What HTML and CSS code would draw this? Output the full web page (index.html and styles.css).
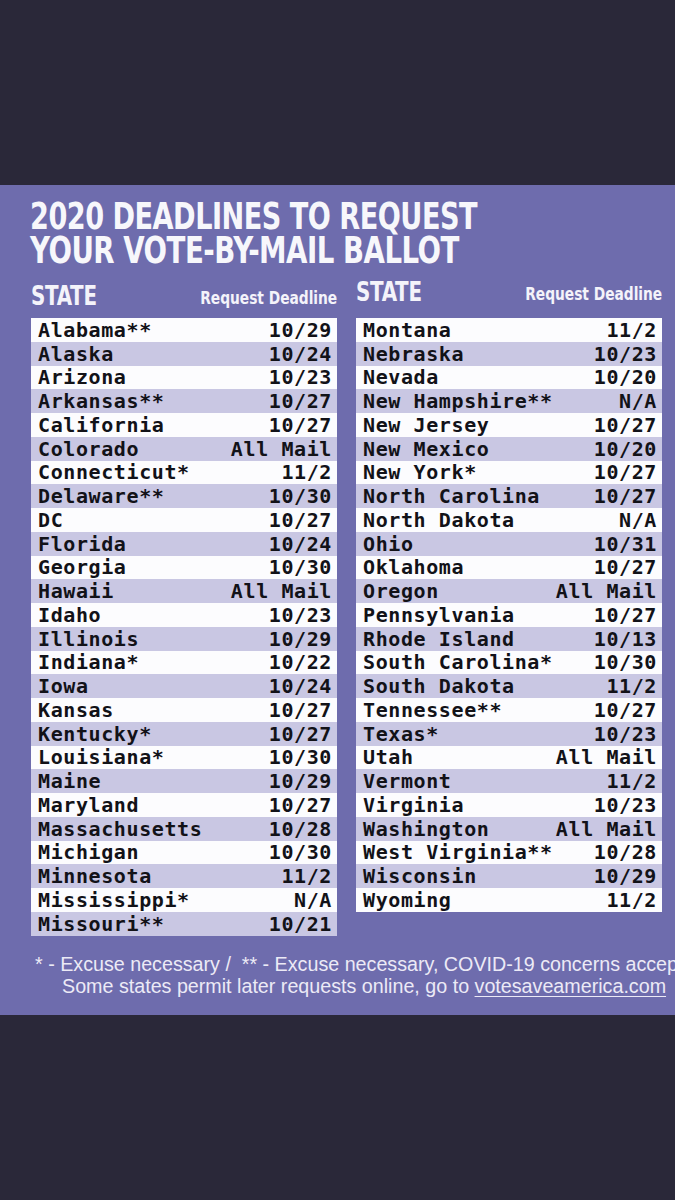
FILE: index.html
```html
<!DOCTYPE html>
<html lang="en">
<head>
<meta charset="utf-8">
<title>2020 Deadlines to Request Your Vote-by-Mail Ballot</title>
<link rel="stylesheet" href="styles.css">
</head>
<body>
<div class="page">
  <div class="band"></div>
  <section class="panel">
    <h1 class="title"><span class="title-line">2020 DEADLINES TO REQUEST</span><span class="title-line">YOUR VOTE-BY-MAIL BALLOT</span></h1>
    <div class="columns">
      <div class="col">
        <div class="head"><span class="head-state">STATE</span><span class="head-deadline">Request Deadline</span></div>
        <div class="table">
          <div class="row"><span>Alabama**</span><span>10/29</span></div>
          <div class="row alt"><span>Alaska</span><span>10/24</span></div>
          <div class="row"><span>Arizona</span><span>10/23</span></div>
          <div class="row alt"><span>Arkansas**</span><span>10/27</span></div>
          <div class="row"><span>California</span><span>10/27</span></div>
          <div class="row alt"><span>Colorado</span><span>All Mail</span></div>
          <div class="row"><span>Connecticut*</span><span>11/2</span></div>
          <div class="row alt"><span>Delaware**</span><span>10/30</span></div>
          <div class="row"><span>DC</span><span>10/27</span></div>
          <div class="row alt"><span>Florida</span><span>10/24</span></div>
          <div class="row"><span>Georgia</span><span>10/30</span></div>
          <div class="row alt"><span>Hawaii</span><span>All Mail</span></div>
          <div class="row"><span>Idaho</span><span>10/23</span></div>
          <div class="row alt"><span>Illinois</span><span>10/29</span></div>
          <div class="row"><span>Indiana*</span><span>10/22</span></div>
          <div class="row alt"><span>Iowa</span><span>10/24</span></div>
          <div class="row"><span>Kansas</span><span>10/27</span></div>
          <div class="row alt"><span>Kentucky*</span><span>10/27</span></div>
          <div class="row"><span>Louisiana*</span><span>10/30</span></div>
          <div class="row alt"><span>Maine</span><span>10/29</span></div>
          <div class="row"><span>Maryland</span><span>10/27</span></div>
          <div class="row alt"><span>Massachusetts</span><span>10/28</span></div>
          <div class="row"><span>Michigan</span><span>10/30</span></div>
          <div class="row alt"><span>Minnesota</span><span>11/2</span></div>
          <div class="row"><span>Mississippi*</span><span>N/A</span></div>
          <div class="row alt"><span>Missouri**</span><span>10/21</span></div>
        </div>
      </div>
      <div class="col">
        <div class="head head-right"><span class="head-state">STATE</span><span class="head-deadline">Request Deadline</span></div>
        <div class="table">
          <div class="row"><span>Montana</span><span>11/2</span></div>
          <div class="row alt"><span>Nebraska</span><span>10/23</span></div>
          <div class="row"><span>Nevada</span><span>10/20</span></div>
          <div class="row alt"><span>New Hampshire**</span><span>N/A</span></div>
          <div class="row"><span>New Jersey</span><span>10/27</span></div>
          <div class="row alt"><span>New Mexico</span><span>10/20</span></div>
          <div class="row"><span>New York*</span><span>10/27</span></div>
          <div class="row alt"><span>North Carolina</span><span>10/27</span></div>
          <div class="row"><span>North Dakota</span><span>N/A</span></div>
          <div class="row alt"><span>Ohio</span><span>10/31</span></div>
          <div class="row"><span>Oklahoma</span><span>10/27</span></div>
          <div class="row alt"><span>Oregon</span><span>All Mail</span></div>
          <div class="row"><span>Pennsylvania</span><span>10/27</span></div>
          <div class="row alt"><span>Rhode Island</span><span>10/13</span></div>
          <div class="row"><span>South Carolina*</span><span>10/30</span></div>
          <div class="row alt"><span>South Dakota</span><span>11/2</span></div>
          <div class="row"><span>Tennessee**</span><span>10/27</span></div>
          <div class="row alt"><span>Texas*</span><span>10/23</span></div>
          <div class="row"><span>Utah</span><span>All Mail</span></div>
          <div class="row alt"><span>Vermont</span><span>11/2</span></div>
          <div class="row"><span>Virginia</span><span>10/23</span></div>
          <div class="row alt"><span>Washington</span><span>All Mail</span></div>
          <div class="row"><span>West Virginia**</span><span>10/28</span></div>
          <div class="row alt"><span>Wisconsin</span><span>10/29</span></div>
          <div class="row"><span>Wyoming</span><span>11/2</span></div>
        </div>
      </div>
    </div>
    <div class="notes">
      <p class="note note-1">* - Excuse necessary /&nbsp; ** - Excuse necessary, COVID-19 concerns accepted</p>
      <p class="note note-2">Some states permit later requests online, go to <span class="link">votesaveamerica.com</span></p>
    </div>
  </section>
  <div class="band band-bottom"></div>
</div>
</body>
</html>
```

FILE: styles.css
```css
html, body {
  margin: 0;
  padding: 0;
  background: #2a2839;
}

.page {
  width: 675px;
  height: 1200px;
  display: flex;
  flex-direction: column;
  overflow: hidden;
}

.band {
  height: 185px;
  flex: none;
  background: #2a2839;
}

.band-bottom {
  flex: 1;
}

.panel {
  flex: none;
  height: 830px;
  background: #6e6cad;
  box-sizing: border-box;
  padding: 15px 0 0 31px;
  overflow: hidden;
  color: #ffffff;
}

.title {
  margin: 0 0 0 -1px;
  font-family: "DejaVu Sans Condensed", "Liberation Sans", sans-serif;
  font-weight: 700;
  font-size: 37px;
  line-height: 34px;
  letter-spacing: -0.6px;
  color: #f7f7fb;
  display: flex;
  flex-direction: column;
  align-items: flex-start;
}

.title-line {
  display: block;
  white-space: nowrap;
  transform: scaleX(0.815);
  transform-origin: left center;
}

.title-line + .title-line {
  transform: scaleX(0.83);
}

.columns {
  display: grid;
  grid-template-columns: 306px 306px;
  column-gap: 19px;
  margin-top: 14px;
}

.head {
  height: 36px;
  display: flex;
  justify-content: space-between;
  align-items: flex-end;
  padding-bottom: 9px;
  box-sizing: border-box;
  font-family: "DejaVu Sans Condensed", "Liberation Sans", sans-serif;
  font-weight: 700;
  color: #f4f3fa;
}

.head-right {
  padding-bottom: 13px;
}

.head-state {
  display: inline-block;
  font-size: 26px;
  line-height: 26px;
  letter-spacing: -0.3px;
  transform: scaleX(0.85);
  transform-origin: left bottom;
}

.head-deadline {
  display: inline-block;
  font-size: 17px;
  line-height: 17px;
  margin-bottom: 2px;
  white-space: nowrap;
  transform: scaleX(0.9);
  transform-origin: right bottom;
}

.table {
  display: flex;
  flex-direction: column;
}

.row {
  height: 23.75px;
  display: flex;
  justify-content: space-between;
  align-items: center;
  padding: 0 5px 0 7px;
  background: #fcfcfe;
  font-family: "DejaVu Sans Mono", "Liberation Mono", monospace;
  font-weight: 700;
  font-size: 20px;
  letter-spacing: 0.6px;
  color: #121218;
  white-space: pre;
}

.row.alt {
  background: #c9c7e3;
}

.notes {
  margin-top: 17px;
  font-family: "Liberation Sans", sans-serif;
  font-weight: 400;
  font-size: 19.7px;
  line-height: 22px;
  color: #eceaf6;
  white-space: nowrap;
}

.note {
  margin: 0;
}

.note-1 {
  padding-left: 4px;
}

.note-2 {
  padding-left: 31px;
}

.link {
  text-decoration: underline;
  text-underline-offset: 3px;
  text-decoration-thickness: 1px;
}
```
